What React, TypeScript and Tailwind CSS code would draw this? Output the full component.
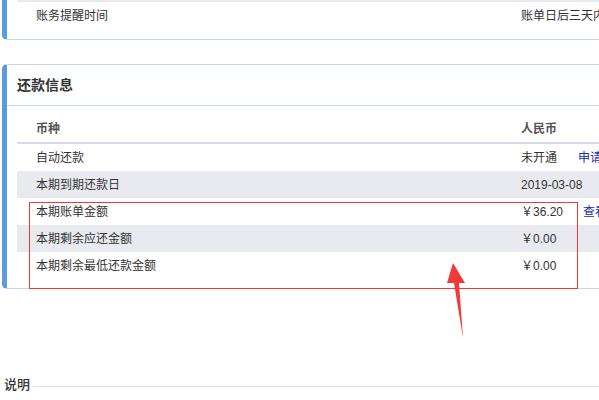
const font = "font-['Liberation_Sans','Noto_Sans_CJK_SC',sans-serif]";

const rows = [
  { label: "自动还款", value: "未开通", link: "申请", linkClass: "ml-0", gray: false },
  { label: "本期到期还款日", value: "2019-03-08", gray: true },
  { label: "本期账单金额", value: "￥36.20", link: "查看", linkClass: "ml-[5px]", gray: false },
  { label: "本期剩余应还金额", value: "￥0.00", gray: true },
  { label: "本期剩余最低还款金额", value: "￥0.00", gray: false },
];

function Row({ label, value, link, linkClass, gray }: { label: string; value: string; link?: string; linkClass?: string; gray?: boolean }) {
  return (
    <div className={`flex h-[27px] items-center text-[12px] text-[#333] ${gray ? "bg-[#e9eaf0]" : "bg-white"}`}>
      <div className="w-[504px] shrink-0 pl-[19px]">{label}</div>
      <div className="w-[57px] shrink-0 whitespace-nowrap">{value}</div>
      {link && <span className={`whitespace-nowrap text-[#1a2fa8] ${linkClass}`}>{link}</span>}
    </div>
  );
}

export default function App() {
  return (
    <div className={`relative h-[400px] w-[599px] overflow-hidden bg-white ${font}`}>
      {/* 上一块卡片（已滚出） */}
      <div className="ml-[2px] rounded-bl-[5px] border-b border-l-[5px] border-b-[#c7d7ea] border-l-[#5b9dda] pb-[10px]">
        <div className="ml-[10px] h-[2px] bg-[#e9eaf0]" />
        <div className="ml-[10px] flex h-[27px] items-center text-[12px] text-[#333]">
          <div className="w-[504px] shrink-0 pl-[19px]">账务提醒时间</div>
          <div className="whitespace-nowrap">账单日后三天内</div>
        </div>
      </div>

      {/* 还款信息 */}
      <div className="ml-[2px] mt-[24px] rounded-l-[5px] border-y border-l-[5px] border-y-[#c7d7ea] border-l-[#5b9dda]">
        <div className="flex h-[41px] items-center border-b border-[#c7d7ea] pl-[10px] text-[14px] font-bold text-[#333]">
          还款信息
        </div>
        <div className="ml-[10px] pb-[9px]">
          <div className="flex h-[38px] border-b-2 border-[#d6daef] pt-[14px] text-[12px] font-bold text-[#555]">
            <div className="w-[504px] shrink-0 pl-[19px]">币种</div>
            <div>人民币</div>
          </div>
          {rows.map((r) => (
            <Row key={r.label} {...r} />
          ))}
        </div>
      </div>

      {/* 说明 */}
      <div className="mt-[86px] flex items-center pl-[4px]">
        <span className="text-[13px] font-medium text-[#333]">说明</span>
        <div className="ml-[3px] mt-[3px] h-px flex-1 bg-[#e0e0e0]" />
      </div>

      {/* 标注 */}
      <div className="absolute left-[29px] top-[202px] h-[87px] w-[549px] border border-[#f03a3a]" />
      <svg className="absolute left-0 top-0" width="599" height="400">
        <polygon points="453,263 465,283 459,283 463,338 454,283 447,283" fill="#f03a3a" />
      </svg>
    </div>
  );
}
